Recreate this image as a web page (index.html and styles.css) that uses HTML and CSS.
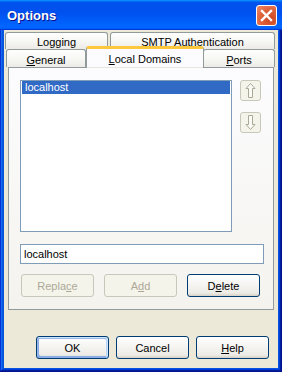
FILE: index.html
```html
<!DOCTYPE html>
<html lang="en">
<head>
    <meta charset="UTF-8">
    <title>Options</title>
    <link rel="stylesheet" href="styles.css">
</head>
<body>

    <div class="window">
        <div class="titlebar">
            <span class="title">Options</span>
            <span class="close-btn">
                <svg width="13" height="13" viewBox="0 0 13 13">
                    <path d="M2 2 L11 11 M11 2 L2 11" stroke="#fff" stroke-width="2.4" stroke-linecap="square"/>
                </svg>
            </span>
        </div>

        <div class="frame">
            <div class="client">
                <div class="tabs">
                    <div class="tab-row">
                        <div class="tab tab-logging">Logging</div>
                        <div class="tab tab-smtp"><u>S</u>MTP Authentication</div>
                    </div>
                    <div class="tab-row">
                        <div class="tab tab-general"><u>G</u>eneral</div>
                        <div class="tab active tab-local"><u>L</u>ocal Domains</div>
                        <div class="tab tab-ports"><u>P</u>orts</div>
                    </div>
                </div>

                <div class="panel">
                    <div class="list-area">
                        <div class="listbox">
                            <div class="item selected">localhost</div>
                        </div>
                        <div class="arrows">
                            <div class="arrow-btn">
                                <svg width="21" height="21" viewBox="0 0 21 21">
                                    <path d="M10.5 3.5 L15 8.5 L12.5 8.5 L12.5 17.5 L8.5 17.5 L8.5 8.5 L6 8.5 Z" fill="#fbfbf6" stroke="#aca899" stroke-width="1"/>
                                </svg>
                            </div>
                            <div class="arrow-btn">
                                <svg width="21" height="21" viewBox="0 0 21 21">
                                    <path d="M10.5 17.5 L15 12.5 L12.5 12.5 L12.5 3.5 L8.5 3.5 L8.5 12.5 L6 12.5 Z" fill="#fbfbf6" stroke="#aca899" stroke-width="1"/>
                                </svg>
                            </div>
                        </div>
                    </div>

                    <input type="text" class="textbox" value="localhost">

                    <div class="edit-buttons">
                        <div class="btn disabled">Repla<u>c</u>e</div>
                        <div class="btn disabled">A<u>d</u>d</div>
                        <div class="btn">D<u>e</u>lete</div>
                    </div>
                </div>

                <div class="dialog-buttons">
                    <div class="btn default">OK</div>
                    <div class="btn">Cancel</div>
                    <div class="btn"><u>H</u>elp</div>
                </div>
            </div>
        </div>
    </div>

</body>
</html>
```

FILE: styles.css
```css
* { box-sizing: border-box; }
body {
    margin: 0;
    font-family: "Liberation Sans", Arial, sans-serif;
    font-size: 11px;
    color: #000;
}
u { text-decoration: underline; text-underline-offset: 1px; }

.window {
    width: 282px;
    height: 372px;
    display: flex;
    flex-direction: column;
}

/* title bar */
.titlebar {
    height: 30px;
    display: flex;
    align-items: center;
    justify-content: space-between;
    padding: 0 5px 0 7px;
    background: linear-gradient(180deg, #0997ff, #0053ee 8%, #0050ee 40%, #0066ff 88%, #0066ff 93%, #005bff 95%, #003dd7 96%, #003dd7);
}
.title {
    color: #fff;
    font-weight: bold;
    font-size: 13px;
    padding-top: 1px;
    text-shadow: 1px 1px #0f1089;
}
.close-btn {
    width: 21px;
    height: 21px;
    border: 1px solid #fff;
    border-radius: 3px;
    background: radial-gradient(circle at 70% 70%, #cc4622, #e0643c 55%, #f08a6c);
    display: flex;
    align-items: center;
    justify-content: center;
}

/* frame */
.frame {
    flex: 1;
    display: flex;
    padding: 0 4px 4px;
    background: #0855dd;
    box-shadow: inset -1px -1px #00138c, inset 1px 0 #0831d9, inset -2px -2px #001ea0, inset 2px 0 #166aee, inset -3px -3px #003bda;
}
.client {
    flex: 1;
    background: #ece9d8;
    display: flex;
    flex-direction: column;
}

/* tabs */
.tabs { margin-top: 2px; }
.tab-row { display: flex; height: 17px; }
.tab-row + .tab-row { height: 18px; }
.tab {
    height: 100%;
    border: 1px solid #919b9c;
    border-bottom: none;
    border-radius: 3px 3px 0 0;
    background: linear-gradient(180deg, #fff, #f7f7f4 50%, #ecebe6);
    text-align: center;
    line-height: 13px;
    padding-top: 3px;
}
.tab-logging { margin-left: 1px; width: 103px; }
.tab-smtp { margin-left: 2px; width: 165px; }
.tab-general { margin-left: 2px; width: 80px; padding-top: 4px; }
.tab-local { width: 118px; }
.tab-ports { margin-left: -1px; width: 72px; padding-top: 4px; }
.tab.active {
    position: relative;
    z-index: 2;
    height: 22px;
    margin-top: -3px;
    padding-top: 4px;
    background: #fcfcfe;
    border-top: 3px solid #ffc73c;
    box-shadow: inset 0 -1px #e7e6e0;
}

/* tab page */
.panel {
    margin-left: 4px;
    width: 266px;
    height: 243px;
    border: 1px solid #919b9c;
    background: linear-gradient(180deg, #fcfcfe, #f4f3ee);
    padding: 12px 0 0 11px;
}
.list-area { display: flex; gap: 8px; }
.listbox {
    width: 212px;
    height: 152px;
    background: #fff;
    border: 1px solid #7f9db9;
    padding: 0 1px;
}
.item { height: 13px; line-height: 13px; padding-left: 3px; }
.item.selected { background: #316ac5; color: #fff; }
.arrows { display: flex; flex-direction: column; gap: 11px; }
.arrow-btn {
    width: 21px;
    height: 21px;
    border: 1px solid #c9c7ba;
    border-radius: 3px;
    background: #f5f4ea;
}
.arrow-btn svg { display: block; margin: -1px; }

.textbox {
    display: block;
    margin-top: 12px;
    width: 244px;
    height: 20px;
    border: 1px solid #7f9db9;
    padding: 0 3px;
    font-family: inherit;
    font-size: 11px;
    color: #000;
    outline: none;
}

.edit-buttons { display: flex; gap: 10px; margin: 10px 0 0 1px; }

/* buttons */
.btn {
    width: 73px;
    height: 23px;
    border: 1px solid #003c74;
    border-radius: 3px;
    background: linear-gradient(180deg, #fff, #ecebe6 86%, #d6d0c5);
    display: flex;
    align-items: center;
    justify-content: center;
}
.btn.disabled {
    border-color: #c9c7ba;
    background: #f5f4ea;
    color: #aca899;
}
.btn.default {
    box-shadow: inset -1px 1px #cee7ff, inset 1px 2px #98b8ea, inset -2px 2px #bcd4f6, inset 1px -1px #89ade4, inset 2px -2px #89ade4;
}

.dialog-buttons { display: flex; gap: 7px; margin: 26px 0 0 32px; }
```
